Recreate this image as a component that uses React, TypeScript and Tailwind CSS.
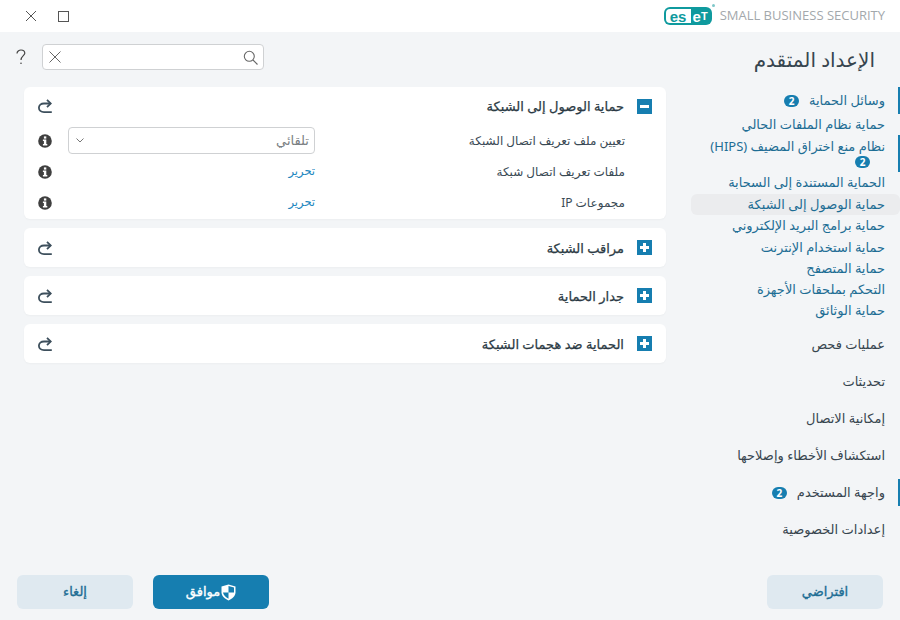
import React from "react";

const Redo = () => (
  <svg width="14" height="14" viewBox="0 0 14 14" fill="none" stroke="#3d4f5c" strokeWidth="1.8" className="block">
    <path d="M13.800 13.100H6C3 13.100 .9 11.300 .9 8.800S3 4.500 6 4.500H12.500" />
    <path d="M9 .8l3.800 3.700L9 8.200" />
  </svg>
);
const Info = () => (
  <svg width="14" height="14" viewBox="0 0 14 14" className="block">
    <circle cx="7" cy="7" r="6.8" fill="#3f3f3f" />
    <rect x="5.900" y="2.400" width="2.400" height="2.200" fill="#fff" />
    <path d="M4.900 5.600h3.400v4.400h1v1.400H4.900V10h1V7H4.900z" fill="#fff" />
  </svg>
);
const Toggle = ({ open }: { open?: boolean }) => (
  <span className="w-[15px] h-[15px] bg-[#167eb0] flex items-center justify-center relative shrink-0">
    <span className="w-[9px] h-[3px] bg-white" />
    {!open && <span className="absolute w-[3px] h-[9px] bg-white" />}
  </span>
);
const Badge = ({ className = "" }: { className?: string }) => (
  <span className={`w-[15px] h-[12px] rounded-full bg-[#167eb0] text-white text-[10px] font-bold flex items-center justify-center leading-none ${className}`}>2</span>
);

const PanelHead = ({ title, open }: { title: string; open?: boolean }) => (
  <div className="flex items-center pr-[14px] pl-[14px] h-full">
    <Toggle open={open} />
    <h3 className="mr-[13px] pt-[2px] text-[13px] font-medium text-[#2b3a44] [-webkit-text-stroke:0.25px]">{title}</h3>
    <span className="mr-auto"><Redo /></span>
  </div>
);

const Row = ({ label, children }: { label: string; children: React.ReactNode }) => (
  <div className="flex items-center h-[31px] pr-[41px]">
    <span className="w-[310px] text-[12px] text-[#3a4a55] shrink-0">{label}</span>
    <div className="w-[247px] shrink-0">{children}</div>
    <span className="mr-[16px]"><Info /></span>
  </div>
);

const Panel = ({ title }: { title: string }) => (
  <section className="bg-white rounded-md h-[39px] mt-[9px] shadow-[0_1px_2px_rgba(0,0,0,0.03)]">
    <PanelHead title={title} />
  </section>
);

const Nav = ({ t, h, active, bar, badge, color = "text-[#1d6d94]" }: { t: string; h: string; active?: boolean; bar?: boolean; badge?: boolean; color?: string }) => (
  <div className={`relative flex items-center pr-[15px] ${h} text-[13px] ${color} ${active ? "bg-[#ebecee] rounded-md" : ""}`}>
    {bar && <span className="absolute right-0 top-0 bottom-0 w-[2px] bg-[#167eb0]" />}
    <span>{t}</span>
    {badge && <Badge className="mr-[10px]" />}
  </div>
);

const Btn = ({ children, primary }: { children: React.ReactNode; primary?: boolean }) => (
  <button className={`w-[116px] h-[34px] rounded-md flex items-center justify-center gap-[1px] text-[13px] font-medium [-webkit-text-stroke:0.35px] ${primary ? "bg-[#167eb0] text-white" : "bg-[#dfe9f0] text-[#1d6d94]"}`}>
    {children}
  </button>
);

export default function App() {
  return (
    <div dir="rtl" className="w-[900px] h-[620px] overflow-hidden bg-[#f3f5f7] flex flex-col font-['Noto_Sans','DejaVu_Sans',sans-serif]">
      <header className="h-8 bg-white flex items-center shrink-0">
        <div dir="ltr" className="flex items-center mr-[15px]">
          <span className="relative w-[48px] h-[18px] bg-[#0f9a9e] rounded-[6px] flex items-center p-[2px] font-['Liberation_Sans',sans-serif] font-bold text-[15px] leading-none">
            <span className="w-[25px] h-[14px] bg-white rounded-l-[4px] text-[#0f9a9e] flex items-center justify-center">es</span>
            <span className="flex-1 text-white text-center flex items-center justify-center">e<span className="text-[11px]">T</span></span>
            <span className="absolute -right-[3px] -top-[3px] w-[3px] h-[3px] rounded-full bg-[#7fc7c9]" />
          </span>
          <span className="ml-[8px] text-[13px] text-[#a3a8ac] font-['Open_Sans',sans-serif]">SMALL BUSINESS SECURITY</span>
        </div>
        <div className="mr-auto flex items-center ml-[25px] gap-[21px]">
          <span className="w-[11px] h-[11px] border border-[#555]" />
          <svg width="12" height="12" viewBox="0 0 12 12" stroke="#555" strokeWidth="1"><path d="M1 1l10 10M11 1L1 11" /></svg>
        </div>
      </header>

      <div className="flex flex-1 min-h-0">
        <aside className="w-[209px] shrink-0 flex flex-col">
          <h1 className="text-[20px] font-medium text-[#37454f] pr-[25px] h-[55px] pt-[11px] leading-[34px]">الإعداد المتقدم</h1>
          <Nav t="وسائل الحماية" h="h-[27px]" bar badge />
          <Nav t="حماية نظام الملفات الحالي" h="h-[21px]" />
          <div className="relative pr-[15px] h-[37px] pt-[2px] text-[13px] text-[#1d6d94] leading-[19px]">
            <span className="absolute right-0 top-0 bottom-0 w-[2px] bg-[#167eb0]" />
            <div>نظام منع اختراق المضيف (HIPS)</div>
            <Badge className="mr-[15px]" />
          </div>
          <Nav t="الحماية المستندة إلى السحابة" h="h-[22px]" />
          <Nav t="حماية الوصول إلى الشبكة" h="h-[21px]" active />
          <Nav t="حماية برامج البريد الإلكتروني" h="h-[22px]" />
          <Nav t="حماية استخدام الإنترنت" h="h-[21px]" />
          <Nav t="حماية المتصفح" h="h-[21px]" />
          <Nav t="التحكم بملحقات الأجهزة" h="h-[21px]" />
          <Nav t="حماية الوثائق" h="h-[21px]" />
          <div className="h-[5px]" />
          {["عمليات فحص", "تحديثات", "إمكانية الاتصال", "استكشاف الأخطاء وإصلاحها"].map((t) => (
            <Nav key={t} t={t} h="h-[37px]" color="text-[#37454f] font-medium" />
          ))}
          <Nav t="واجهة المستخدم" h="h-[27px] my-[5px]" bar badge color="text-[#37454f] font-medium" />
          <Nav t="إعدادات الخصوصية" h="h-[37px]" color="text-[#37454f] font-medium" />
        </aside>

        <main className="flex-1 min-w-0 flex flex-col pr-[25px] pl-[24px]">
          <div className="flex items-center justify-end gap-[16px] h-[26px] mt-[12px] -ml-[8px] mb-[17px]">
            <div className="w-[222px] h-[26px] bg-white border border-[#cfd1d3] rounded-[4px] flex items-center justify-between pr-[5px] pl-[6px]">
              <svg width="15" height="15" viewBox="0 0 15 15" fill="none" stroke="#666" strokeWidth="1.100"><circle cx="6.300" cy="6.300" r="5" /><path d="M10 10l4.500 4.500" /></svg>
              <svg width="12" height="12" viewBox="0 0 12 12" stroke="#666" strokeWidth="1"><path d="M.5.5l11 11M11.500.5l-11 11" /></svg>
            </div>
            <svg width="10" height="16" viewBox="0 0 10 16" fill="none" stroke="#444" strokeWidth="1.200">
              <path d="M1 4.500C1 2.500 3 1 5 1s3.800 1.300 3.800 3.200C8.800 6.500 5 7 5 11" />
              <circle cx="5" cy="14.200" r=".8" fill="#444" stroke="none" />
            </svg>
          </div>

          <section className="bg-white rounded-md h-[132px] shadow-[0_1px_2px_rgba(0,0,0,0.03)]">
            <div className="h-[38px]"><PanelHead title="حماية الوصول إلى الشبكة" open /></div>
            <Row label="تعيين ملف تعريف اتصال الشبكة">
              <div className="h-[27px] bg-white border border-[#cfd1d3] rounded-[4px] flex items-center justify-between pr-[5px] pl-[7px] text-[13px] text-[#7a7f83]">
                <span>تلقائي</span>
                <svg width="8" height="5" viewBox="0 0 8 5" fill="none" stroke="#777" strokeWidth="1"><path d="M.5.5L4 4 7.500.5" /></svg>
              </div>
            </Row>
            <Row label="ملفات تعريف اتصال شبكة"><span className="block text-[11.500px] text-[#1e87c0] -mt-[1px]">تحرير</span></Row>
            <Row label="مجموعات IP"><span className="block text-[11.500px] text-[#1e87c0] -mt-[1px]">تحرير</span></Row>
          </section>
          <Panel title="مراقب الشبكة" />
          <Panel title="جدار الحماية" />
          <Panel title="الحماية ضد هجمات الشبكة" />
        </main>
      </div>

      <footer className="h-[45px] shrink-0 flex items-start pr-[17px] pl-[17px] gap-[20px]">
        <Btn>افتراضي</Btn>
        <span className="mr-auto"><Btn primary>
          <svg width="15" height="17" viewBox="0 0 15 17"><path d="M7.500.500L14.500 2.500V8.500c0 3.500-3.500 6.500-7 8-3.500-1.500-7-4.500-7-8V2.500z" fill="#fff" /><path d="M7.500 2v6.500H13V3.500zM7.500 8.500H2c.3 2.500 2.800 5 5.500 6.200z" fill="#167eb0" /></svg>
          <span>موافق</span>
        </Btn></span>
        <Btn>إلغاء</Btn>
      </footer>
    </div>
  );
}
